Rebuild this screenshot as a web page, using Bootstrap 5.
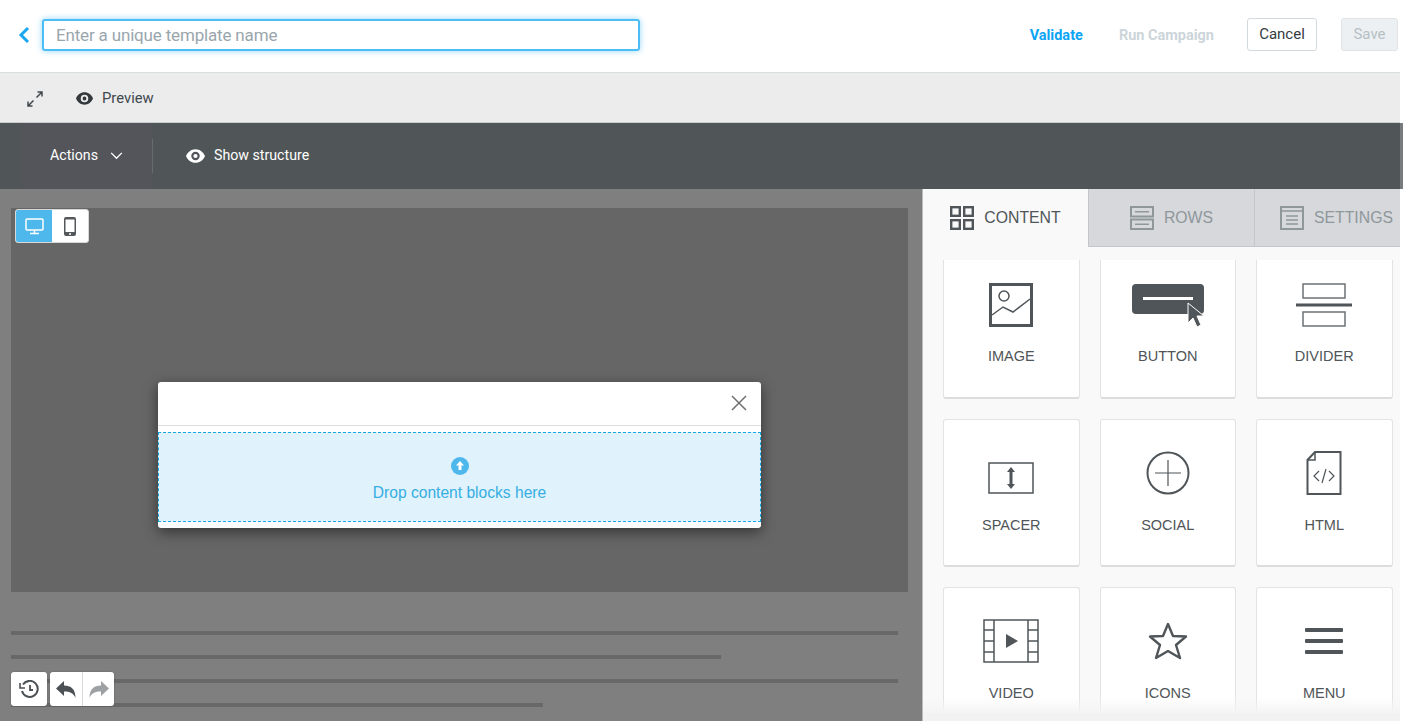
<!DOCTYPE html>
<html lang="en">
<head>
    <meta charset="UTF-8">
    <meta name="viewport" content="width=device-width, initial-scale=1.0">
    <title>Template editor</title>
    <link href="https://cdn.jsdelivr.net/npm/bootstrap@5.3.0/dist/css/bootstrap.min.css" rel="stylesheet">
    <style>
        html, body { height: 721px; overflow: hidden; }
        body { font-family: Roboto, "Liberation Sans", sans-serif; color: #4f5558; background: #fff; }

        /* top bar */
        .top-bar { height: 73px; padding: 0 5px 3px 17px; border-bottom: 1px solid #d9dee1; }
        .back-link { width: 25px; line-height: 0; }
        .name-input.form-control { width: 598px; height: 32px; padding: 0 12px; font-size: 17px; letter-spacing: -.17px; border: 2px solid #4dbdf5; border-radius: 3px; box-shadow: 0 0 6px rgba(77, 189, 245, .6); color: #4f5558; }
        .name-input::placeholder { color: #9aa6ad; opacity: 1; }
        .link-validate { color: #0ea5f5; font-weight: 700; font-size: 14.5px; margin: 2px 36px 0 0; }
        .link-run { color: #ccd5da; font-weight: 700; font-size: 14.5px; margin: 2px 33px 0 0; }
        .btn-cancel.btn { width: 70px; height: 33px; padding: 0; margin-right: 24px; font-size: 15px; color: #333c42; background: #fff; border: 1px solid #d3dade; border-radius: 3px; }
        .btn-save.btn { width: 57px; height: 33px; padding: 0; font-size: 15px; color: #b5bfc5; background: #edf0f2; border: 1px solid #dfe4e7; border-radius: 3px; opacity: 1; }

        /* preview bar */
        .preview-bar { height: 50px; padding: 2px 0 0 27px; background: #ececec; border-bottom: 1px solid #c9cbcc; font-size: 14.8px; color: #40484d; gap: 33px; }
        .preview-link { gap: 9px; }

        /* actions bar */
        .actions-bar { height: 66px; background: #505558; color: #fff; font-size: 14.2px; }
        .actions-cell { width: 130px; height: 66px; margin-left: 22px; padding-left: 28px; gap: 12px; background: #53555a; }
        .bar-divider { width: 1px; height: 34px; background: #676b6e; }
        .structure-link { margin-left: 33px; gap: 9px; }

        /* work area */
        .work-area { height: 532px; }
        .stage { width: 922px; background: #7f7f7f; padding: 19px 14px 0 11px; }
        .canvas-panel { height: 384px; background: #666; }
        .skeleton-lines { margin-top: 39px; gap: 20px; padding-right: 10px; }
        .skeleton-line { height: 4px; background: #686868; }

        .view-toggle { position: absolute; left: 15px; top: 20px; height: 34px; background: #fff; border-radius: 3px; border: 1px solid #d8d8d8; overflow: hidden; }
        .view-toggle span { width: 36px; }
        .view-toggle .view-on { background: #4eb7ec; }

        .drop-modal { position: absolute; left: 158px; top: 193px; width: 603px; height: 146px; background: #fff; border-radius: 3px; box-shadow: 0 4px 14px rgba(0, 0, 0, .5); }
        .modal-top { height: 44px; padding: 0 14px 2px 0; border-bottom: 1px solid #dedede; }
        .drop-zone { height: 90px; margin-top: 6px; background: #e0f2fb; border: 1px dashed #14a8e6; color: #35aee3; font-family: "Liberation Sans", Arial, sans-serif; font-size: 15.6px; gap: 6px; padding-top: 7px; }

        .history-tools { position: absolute; left: 11px; top: 483px; gap: 3px; }
        .tool-box { height: 34px; background: #fff; border-radius: 3px; box-shadow: 0 0 2px rgba(0, 0, 0, .25); }
        .tool-box span { width: 32px; }
        .tool-box .tool-wide { width: 36px; }
        .tool-box span + span { border-left: 1px solid #d9d9d9; }

        /* right panel */
        .side-panel { width: 481px; background: #f9f9f9; border-left: 1px solid #bbb; font-family: "Liberation Sans", Arial, sans-serif; }
        .tab-strip { height: 58px; width: 477px; }
        .tab-item { height: 58px; gap: 10px; font-size: 15.8px; color: #8f979b; background: #d6d8db; border-bottom: 1px solid #c4c7c9; border-right: 1px solid #c4c7c9; }
        .tab-item.tab-on { width: 166px; color: #4f5558; background: #f9f9f9; border-bottom: 0; }
        .tab-rows { width: 166px; }
        .tab-settings { width: 145px; padding-left: 18px; border-right: 0; white-space: nowrap; }

        .block-clip { height: 453px; margin-top: 13px; overflow: hidden; position: relative; }
        .block-clip::after { content: ""; position: absolute; left: 0; right: 0; bottom: 0; height: 16px; background: linear-gradient(rgba(242, 242, 242, 0), #f4f4f4); }
        .clip-foot { height: 8px; background: #f2f2f2; }
        .block-grid { display: grid; grid-template-columns: repeat(3, 136.5px); column-gap: 20px; row-gap: 20px; padding-left: 20px; }
        .block-tile { background: #fff; border: 1px solid #e3e3e3; border-bottom: 2px solid #dcdcdc; border-radius: 3px; font-size: 14.5px; color: #4f5558; height: 148px; }
        .block-tile.first-row { height: 139px; border-top: 0; border-radius: 0 0 3px 3px; }
        .tile-icon { height: 60px; margin-top: 23px; margin-bottom: 12px; }
        .first-row .tile-icon { margin-top: 15px; margin-bottom: 11px; }
        .tile-label { line-height: 20px; }
        .page-edge { position: absolute; right: 0; top: 0; width: 3px; height: 721px; background: #fff; }
        .page-edge::after { content: ""; position: absolute; left: 0; top: 123px; width: 3px; height: 66px; background: #777b7d; }
    </style>
</head>
<body>
    <div class="top-bar d-flex align-items-center">
        <a class="back-link" href="#">
            <svg width="14" height="18" viewBox="0 0 14 18"><path d="M11 2 L4 9 L11 16" fill="none" stroke="#1aa7f2" stroke-width="3"/></svg>
        </a>
        <input class="name-input form-control" type="text" placeholder="Enter a unique template name">
        <div class="ms-auto d-flex align-items-center">
            <span class="link-validate">Validate</span>
            <span class="link-run">Run Campaign</span>
            <button class="btn btn-cancel">Cancel</button>
            <button class="btn btn-save" disabled>Save</button>
        </div>
    </div>

    <div class="preview-bar d-flex align-items-center">
        <svg width="16" height="16" viewBox="0 0 16 16" fill="none" stroke="#40484d" stroke-width="1.5"><path d="M9.5 6.5 L15 1 M10.5 1 H15 V5.5 M6.5 9.5 L1 15 M1 10.5 V15 H5.5"/></svg>
        <span class="preview-link d-flex align-items-center">
            <svg width="17" height="13" viewBox="0 0 18 13"><path fill-rule="evenodd" fill="#33393d" d="M9 0 C13 0 16.5 2.6 18 6.5 C16.5 10.4 13 13 9 13 C5 13 1.500 10.400 0 6.500 C1.500 2.600 5 0 9 0Z M9 2.500 A4 4 0 1 0 9 10.500 A4 4 0 1 0 9 2.500Z M9 4.500 A2 2 0 1 1 9 8.500 A2 2 0 1 1 9 4.500Z"/></svg>
            Preview
        </span>
    </div>

    <div class="actions-bar d-flex align-items-center">
        <div class="actions-cell d-flex align-items-center">
            Actions
            <svg width="13" height="8" viewBox="0 0 14 9"><path d="M1 1 L7 7 L13 1" fill="none" stroke="#fff" stroke-width="1.500"/></svg>
        </div>
        <div class="bar-divider"></div>
        <div class="structure-link d-flex align-items-center">
            <svg width="19" height="14" viewBox="0 0 18 13"><path fill-rule="evenodd" fill="#fff" d="M9 0 C13 0 16.5 2.6 18 6.5 C16.5 10.4 13 13 9 13 C5 13 1.500 10.400 0 6.500 C1.500 2.600 5 0 9 0Z M9 2.500 A4 4 0 1 0 9 10.500 A4 4 0 1 0 9 2.500Z M9 4.500 A2 2 0 1 1 9 8.500 A2 2 0 1 1 9 4.500Z"/></svg>
            Show structure
        </div>
    </div>

    <div class="work-area d-flex position-relative">
        <div class="stage">
            <div class="canvas-panel"></div>
            <div class="skeleton-lines d-flex flex-column">
                <div class="skeleton-line w-100"></div>
                <div class="skeleton-line" style="width: 710px"></div>
                <div class="skeleton-line w-100"></div>
                <div class="skeleton-line" style="width: 532px"></div>
            </div>
        </div>

        <div class="view-toggle d-flex">
            <span class="view-on d-flex align-items-center justify-content-center">
                <svg width="19" height="17" viewBox="0 0 19 17" fill="none" stroke="#fff"><rect x="1" y="1" width="17" height="11" rx="1" stroke-width="1.500"/><path d="M9.500 12 V15 M5 15.500 H14" stroke-width="1.500"/></svg>
            </span>
            <span class="d-flex align-items-center justify-content-center">
                <svg width="12" height="19" viewBox="0 0 12 19"><path fill-rule="evenodd" fill="#54585b" d="M2 0 H10 A2 2 0 0 1 12 2 V17 A2 2 0 0 1 10 19 H2 A2 2 0 0 1 0 17 V2 A2 2 0 0 1 2 0Z M1.500 2.500 V15 H10.500 V2.500Z"/><circle cx="6" cy="17" r="1" fill="#fff"/></svg>
            </span>
        </div>

        <div class="drop-modal">
            <div class="modal-top d-flex align-items-center justify-content-end">
                <svg width="16" height="16" viewBox="0 0 16 16"><path d="M1 1 L15 15 M15 1 L1 15" stroke="#6f6f6f" stroke-width="1.500"/></svg>
            </div>
            <div class="drop-zone d-flex flex-column align-items-center justify-content-center">
                <svg width="18" height="18" viewBox="0 0 18 18"><circle cx="9" cy="9" r="9" fill="#4eb7ec"/><path d="M9 4 L13 8.500 H10.500 V13 H7.500 V8.500 H5Z" fill="#fff"/></svg>
                <span>Drop content blocks here</span>
            </div>
        </div>

        <div class="history-tools d-flex">
            <div class="tool-box d-flex">
                <span class="tool-wide d-flex align-items-center justify-content-center">
                    <svg width="20" height="19" viewBox="0 0 20 19" fill="none" stroke="#4c5155" stroke-width="2"><path d="M4 4.500 A8 8 0 1 1 3 11"/><path d="M1 3 V8 H6" stroke-width="1.600"/><path d="M11 5 V10 H14" stroke-width="1.800"/></svg>
                </span>
            </div>
            <div class="tool-box d-flex">
                <span class="d-flex align-items-center justify-content-center">
                    <svg width="20" height="17" viewBox="0 0 20 17"><path fill="#4c5155" d="M8 0 V4.500 C15 4.500 19.500 8 19.500 17 C17.500 12 14 10.500 8 10.500 V15 L0 7.500Z"/></svg>
                </span>
                <span class="d-flex align-items-center justify-content-center">
                    <svg width="20" height="17" viewBox="0 0 20 17"><path fill="#9ea1a3" d="M12 0 V4.500 C5 4.500 .5 8 .5 17 C2.500 12 6 10.500 12 10.500 V15 L20 7.500Z"/></svg>
                </span>
            </div>
        </div>

        <div class="side-panel">
            <div class="tab-strip d-flex">
                <div class="tab-item tab-on d-flex align-items-center justify-content-center">
                    <svg width="24" height="24" viewBox="0 0 24 24" fill="none" stroke="#4f5558" stroke-width="2.400"><rect x="1.200" y="1.200" width="8.600" height="8.600"/><rect x="14.200" y="1.200" width="8.600" height="8.600"/><rect x="1.200" y="14.200" width="8.600" height="8.600"/><rect x="14.200" y="14.200" width="8.600" height="8.600"/></svg>
                    CONTENT
                </div>
                <div class="tab-item tab-rows d-flex align-items-center justify-content-center">
                    <svg width="24" height="24" viewBox="0 0 24 24" fill="none" stroke="#8f979b" stroke-width="2"><rect x="1" y="1" width="22" height="9.500"/><rect x="1" y="13.500" width="22" height="9.500"/><path d="M5 5.700 H19 M5 18.300 H19" stroke-width="1.500"/></svg>
                    ROWS
                </div>
                <div class="tab-item tab-settings d-flex align-items-center justify-content-center">
                    <svg width="24" height="24" viewBox="0 0 24 24" fill="none" stroke="#8f979b" stroke-width="2"><rect x="1" y="1" width="22" height="22"/><path d="M1 5 H23 M6 10 H18 M6 14 H18 M6 18 H18" stroke-width="1.300"/></svg>
                    SETTINGS
                </div>
            </div>

            <div class="block-clip">
                <div class="block-grid">
                    <div class="block-tile first-row d-flex flex-column align-items-center">
                        <div class="tile-icon d-flex align-items-center">
                            <svg width="44" height="44" viewBox="0 0 44 44" fill="none" stroke="#4f5558"><rect x="1.500" y="1.500" width="41" height="41" stroke-width="3"/><circle cx="15" cy="13" r="5" stroke-width="1.500"/><path d="M3 32 L14 24 L24 29 L41 16" stroke-width="1.500"/></svg>
                        </div>
                        <div class="tile-label">IMAGE</div>
                    </div>
                    <div class="block-tile first-row d-flex flex-column align-items-center">
                        <div class="tile-icon d-flex align-items-center">
                            <svg width="74" height="44" viewBox="0 0 74 44"><rect x="1" y="1" width="72" height="30" rx="4" fill="#4f5558"/><rect x="12" y="14" width="50" height="3" fill="#fff"/><path d="M57 20 L57 40 L62 35 L66 44 L70 42 L66 33 L73 33Z" fill="#4f5558" stroke="#fff" stroke-width="1"/></svg>
                        </div>
                        <div class="tile-label">BUTTON</div>
                    </div>
                    <div class="block-tile first-row d-flex flex-column align-items-center">
                        <div class="tile-icon d-flex align-items-center">
                            <svg width="56" height="44" viewBox="0 0 56 44" fill="none" stroke="#6d7275"><rect x="7" y="1" width="42" height="14" stroke-width="1.500"/><rect x="7" y="29" width="42" height="14" stroke-width="1.500"/><path d="M0 22 H56" stroke="#4f5558" stroke-width="3"/></svg>
                        </div>
                        <div class="tile-label">DIVIDER</div>
                    </div>

                    <div class="block-tile d-flex flex-column align-items-center">
                        <div class="tile-icon d-flex align-items-center">
                            <svg width="46" height="44" viewBox="0 0 46 44"><rect x="1" y="12" width="44" height="30" fill="none" stroke="#4f5558" stroke-width="1.500"/><path d="M23 16 L27 21 H24.500 V33 H27 L23 38 L19 33 H21.500 V21 H19Z" fill="#4f5558"/></svg>
                        </div>
                        <div class="tile-label">SPACER</div>
                    </div>
                    <div class="block-tile d-flex flex-column align-items-center">
                        <div class="tile-icon d-flex align-items-center">
                            <svg width="44" height="44" viewBox="0 0 44 44" fill="none" stroke="#4f5558"><circle cx="22" cy="22" r="20.500" stroke-width="2"/><path d="M22 9 V35 M9 22 H35" stroke-width="1.200"/></svg>
                        </div>
                        <div class="tile-label">SOCIAL</div>
                    </div>
                    <div class="block-tile d-flex flex-column align-items-center">
                        <div class="tile-icon d-flex align-items-center">
                            <svg width="36" height="44" viewBox="0 0 36 44" fill="none" stroke="#4f5558"><path d="M9 1 H34.500 V43 H1.500 V9Z" stroke-width="2"/><path d="M9 1 V9 H1.500" stroke-width="1.500"/><path d="M13 20 L8 25 L13 30 M23 20 L28 25 L23 30 M20 18 L16 32" stroke-width="1.200"/></svg>
                        </div>
                        <div class="tile-label">HTML</div>
                    </div>

                    <div class="block-tile d-flex flex-column align-items-center">
                        <div class="tile-icon d-flex align-items-center">
                            <svg width="56" height="44" viewBox="0 0 56 44" fill="none" stroke="#4f5558" stroke-width="1.500"><rect x="1" y="1" width="54" height="42"/><path d="M11 1 V43 M45 1 V43 M1 11 H11 M1 22 H11 M1 33 H11 M45 11 H55 M45 22 H55 M45 33 H55"/><path d="M23 15 L35 22 L23 29Z" fill="#4f5558" stroke="none"/></svg>
                        </div>
                        <div class="tile-label">VIDEO</div>
                    </div>
                    <div class="block-tile d-flex flex-column align-items-center">
                        <div class="tile-icon d-flex align-items-center">
                            <svg width="40" height="38" viewBox="0 0 40 38"><path d="M20 2 L25 14 L38 14.500 L28 23 L32 36 L20 29 L8 36 L12 23 L2 14.500 L15 14Z" fill="none" stroke="#4f5558" stroke-width="2.400" stroke-linejoin="round"/></svg>
                        </div>
                        <div class="tile-label">ICONS</div>
                    </div>
                    <div class="block-tile d-flex flex-column align-items-center">
                        <div class="tile-icon d-flex align-items-center">
                            <svg width="38" height="26" viewBox="0 0 38 26"><rect y="0" width="38" height="4" rx="1" fill="#4f5558"/><rect y="11" width="38" height="4" rx="1" fill="#4f5558"/><rect y="22" width="38" height="4" rx="1" fill="#4f5558"/></svg>
                        </div>
                        <div class="tile-label">MENU</div>
                    </div>
                </div>
            </div>
            <div class="clip-foot"></div>
        </div>
    </div>
    <div class="page-edge"></div>
    <script src="https://cdn.jsdelivr.net/npm/bootstrap@5.3.0/dist/js/bootstrap.bundle.min.js"></script>
</body>
</html>
